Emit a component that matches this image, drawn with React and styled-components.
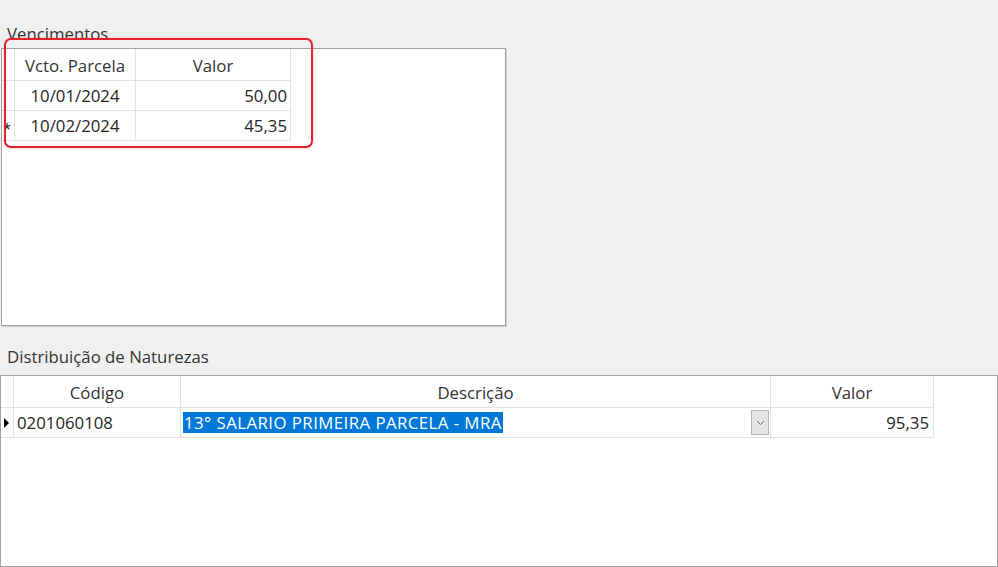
import React from "react";
import styled, { createGlobalStyle } from "styled-components";

const GlobalStyle = createGlobalStyle`
  body {
    margin: 0;
    background: #f0f0f0;
    font-family: "Open Sans", "Noto Sans", sans-serif;
    color: #262626;
  }
`;

const Page = styled.div`
  position: relative;
  width: 998px;
  height: 567px;
  overflow: hidden;
  padding-top: 24px;
  box-sizing: border-box;
  display: flex;
  flex-direction: column;
`;

const GroupLabel = styled.div`
  font-size: 16.8px;
  line-height: 20px;
  padding-left: 7px;
  color: #333;
  margin-bottom: ${(p) => p.$gap}px;
`;

const GridBox = styled.div`
  margin-left: ${(p) => p.$left}px;
  width: ${(p) => p.$width}px;
  height: ${(p) => p.$height}px;
  margin-bottom: ${(p) => p.$after || 0}px;
  box-sizing: border-box;
  border: 1px solid #a0a0a0;
  background: #fff;
  box-shadow: ${(p) => (p.$shadow ? "1px 1px 0 #d0d0d0" : "none")};
  flex-shrink: 0;
`;

const Table = styled.div`
  display: grid;
  grid-template-columns: ${(p) => p.$cols};
  grid-template-rows: 32px;
  grid-auto-rows: 30px;
  width: max-content;
`;

const Cell = styled.div`
  box-sizing: border-box;
  border-right: 1px solid #e2e2e2;
  border-bottom: 1px solid #e2e2e2;
  display: flex;
  align-items: center;
  justify-content: ${(p) =>
    p.$align === "right" ? "flex-end" : p.$align === "center" ? "center" : "flex-start"};
  padding: 0 ${(p) => (p.$pad != null ? p.$pad : 3)}px;
  font-size: 16.8px;
  white-space: nowrap;
  overflow: hidden;
  position: relative;
`;

const HeadCell = styled(Cell)`
  justify-content: center;
  color: #333;
  padding-top: 2px;
`;

const RowHead = styled(Cell)`
  padding: 0;
  justify-content: center;
  font-size: 14px;
  color: #111;
`;

const Star = styled.span`
  margin-left: -2px;
  margin-top: 6px;
`;

const Arrow = styled.span`
  width: 0;
  height: 0;
  border-top: 5px solid transparent;
  border-bottom: 5px solid transparent;
  border-left: 5px solid #000;
  margin-left: -2px;
`;

const Selected = styled.span`
  background: #0078d7;
  color: #fff;
  line-height: 21px;
  padding: 0 1px;
  letter-spacing: 0.45px;
`;

const ComboCell = styled(Cell)`
  padding-left: 2px;
  padding-right: 0;
  justify-content: space-between;
`;

const DropButton = styled.span`
  width: 18px;
  height: 25px;
  box-sizing: border-box;
  background: #e5e5e5;
  border: 1px solid #b4b4b4;
  display: flex;
  align-items: center;
  justify-content: center;
  margin-right: 1px;
`;

const Annotation = styled.div`
  position: absolute;
  left: 4px;
  top: 38px;
  width: 309px;
  height: 110px;
  box-sizing: border-box;
  border: 2px solid #e3232c;
  border-radius: 7px;
  box-shadow: 0 0 2px rgba(227, 35, 44, 0.35);
  pointer-events: none;
`;

const vencimentos = [
  { data: "10/01/2024", valor: "50,00" },
  { data: "10/02/2024", valor: "45,35", marker: "star" },
];

export default function App() {
  return (
    <Page>
      <GlobalStyle />
      <GroupLabel $gap={4}>Vencimentos</GroupLabel>
      <GridBox $left={1} $width={505} $height={278} $shadow $after={21}>
        <Table $cols="13px 121px 155px">
          <RowHead />
          <HeadCell>Vcto. Parcela</HeadCell>
          <HeadCell>Valor</HeadCell>
          {vencimentos.map((v) => (
            <React.Fragment key={v.data}>
              <RowHead>{v.marker === "star" ? <Star>*</Star> : null}</RowHead>
              <Cell $align="center">{v.data}</Cell>
              <Cell $align="right">{v.valor}</Cell>
            </React.Fragment>
          ))}
        </Table>
      </GridBox>

      <GroupLabel $gap={8}>Distribuição de Naturezas</GroupLabel>
      <GridBox $left={0} $width={998} $height={192}>
        <Table $cols="13px 167px 590px 163px">
          <RowHead />
          <HeadCell>Código</HeadCell>
          <HeadCell>Descrição</HeadCell>
          <HeadCell>Valor</HeadCell>
          <RowHead>
            <Arrow />
          </RowHead>
          <Cell>0201060108</Cell>
          <ComboCell>
            <Selected>13° SALARIO PRIMEIRA PARCELA - MRA</Selected>
            <DropButton>
              <svg width="9" height="6" viewBox="0 0 9 6">
                <path d="M1 1 L4.5 4.5 L8 1" fill="none" stroke="#6a6a6a" strokeWidth="1" />
              </svg>
            </DropButton>
          </ComboCell>
          <Cell $align="right" $pad={4}>95,35</Cell>
        </Table>
      </GridBox>

      <Annotation />
    </Page>
  );
}
